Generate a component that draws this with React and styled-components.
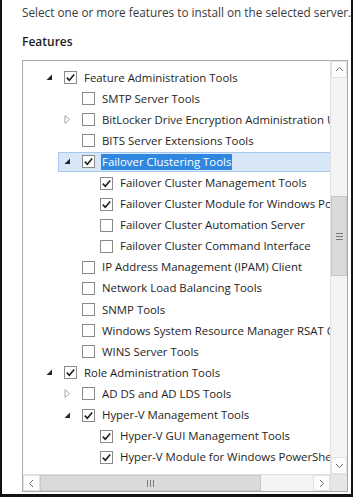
import styled, { createGlobalStyle } from 'styled-components';

const GlobalStyle = createGlobalStyle`
  html, body {
    margin: 0;
    padding: 0;
    background: #ffffff;
  }
  body {
    font-family: "Open Sans", "Noto Sans", sans-serif;
  }
`;

const Frame = styled.div`
  box-sizing: border-box;
  width: 353px;
  height: 497px;
  border-left: 2px solid #111;
  border-right: 2px solid #111;
  border-bottom: 3px solid #111;
  padding: 2px 0 0 20px;
  overflow: hidden;
`;

const Intro = styled.div`
  font-size: 11.75px;
  line-height: 20px;
  color: #3a3a3a;
  white-space: nowrap;
`;

const Heading = styled.div`
  margin-top: 10px;
  font-size: 12px;
  font-weight: 600;
  line-height: 20px;
  color: #1e1e1e;
`;

const ListBox = styled.div`
  margin-top: 8px;
  box-sizing: border-box;
  width: 326px;
  height: 432px;
  border: 1px solid #a9acb1;
  display: grid;
  grid-template-columns: 1fr 17px;
  grid-template-rows: 1fr 17px;
`;

const Viewport = styled.div`
  overflow: hidden;
  padding-top: 6px;
`;

const Row = styled.div`
  height: 21.1px;
  display: flex;
  align-items: center;
  padding-left: 17px;
  white-space: nowrap;
`;

const RowInner = styled.div`
  flex: 1;
  box-sizing: border-box;
  height: ${({ selected }) => (selected ? '20px' : '21px')};
  margin-left: ${({ level }) => level * 18}px;
  display: flex;
  align-items: center;
  background: ${({ selected }) => (selected ? '#d8e7f8' : 'transparent')};
  border: 1px solid ${({ selected }) => (selected ? '#a8c8ee' : 'transparent')};
  border-right: none;
`;

const Expander = styled.div`
  width: 16px;
  height: 16px;
  display: flex;
  align-items: center;
  justify-content: center;
  flex-shrink: 0;
`;

const Box = styled.div`
  box-sizing: border-box;
  width: 13px;
  height: 13px;
  margin-left: 7px;
  border: 1px solid #8a8a8a;
  background: #fff;
  display: flex;
  align-items: center;
  justify-content: center;
  flex-shrink: 0;
`;

const Label = styled.span`
  margin-left: 6px;
  padding: 0 1px;
  font-size: 11.4px;
  line-height: 16px;
  color: ${({ selected }) => (selected ? '#ffffff' : '#1e1e1e')};
  background: ${({ selected }) => (selected ? '#3087e0' : 'transparent')};
`;

const VScroll = styled.div`
  border-left: 1px solid #e0e0e0;
  background: #f4f4f4;
  display: flex;
  flex-direction: column;
`;

const HScroll = styled.div`
  border-top: 1px solid #e0e0e0;
  background: #f4f4f4;
  display: flex;
`;

const Corner = styled.div`
  background: #e6e6e6;
  border-top: 1px solid #e0e0e0;
  border-left: 1px solid #e0e0e0;
`;

const ArrowButton = styled.div`
  box-sizing: border-box;
  width: ${({ horizontal }) => (horizontal ? '17px' : '100%')};
  height: ${({ horizontal }) => (horizontal ? '100%' : '17px')};
  background: #fcfcfc;
  border: 1px solid #e2e2e2;
  display: flex;
  align-items: center;
  justify-content: center;
  flex-shrink: 0;
`;

const Track = styled.div`
  flex: 1;
  display: flex;
  flex-direction: ${({ horizontal }) => (horizontal ? 'row' : 'column')};
`;

const Thumb = styled.div`
  box-sizing: border-box;
  background: #dadada;
  border: 1px solid #c8c8c8;
  display: flex;
  align-items: center;
  justify-content: center;
  ${({ horizontal }) =>
    horizontal
      ? 'width: 221px; height: 100%;'
      : 'height: 80px; width: 100%;'}
`;

const Spacer = styled.div`
  height: ${({ size }) => size}px;
  flex-shrink: 0;
`;

const rows = [
  { level: 0, exp: 'open', checked: true, label: 'Feature Administration Tools' },
  { level: 1, checked: false, label: 'SMTP Server Tools' },
  { level: 1, exp: 'closed', checked: false, label: 'BitLocker Drive Encryption Administration Utilities' },
  { level: 1, checked: false, label: 'BITS Server Extensions Tools' },
  { level: 1, exp: 'open', checked: true, label: 'Failover Clustering Tools', selected: true },
  { level: 2, checked: true, label: 'Failover Cluster Management Tools' },
  { level: 2, checked: true, label: 'Failover Cluster Module for Windows PowerShell' },
  { level: 2, checked: false, label: 'Failover Cluster Automation Server' },
  { level: 2, checked: false, label: 'Failover Cluster Command Interface' },
  { level: 1, checked: false, label: 'IP Address Management (IPAM) Client' },
  { level: 1, checked: false, label: 'Network Load Balancing Tools' },
  { level: 1, checked: false, label: 'SNMP Tools' },
  { level: 1, checked: false, label: 'Windows System Resource Manager RSAT Client' },
  { level: 1, checked: false, label: 'WINS Server Tools' },
  { level: 0, exp: 'open', checked: true, label: 'Role Administration Tools' },
  { level: 1, exp: 'closed', checked: false, label: 'AD DS and AD LDS Tools' },
  { level: 1, exp: 'open', checked: true, label: 'Hyper-V Management Tools' },
  { level: 2, checked: true, label: 'Hyper-V GUI Management Tools' },
  { level: 2, checked: true, label: 'Hyper-V Module for Windows PowerShell' },
];

const OpenTriangle = () => (
  <svg width="7" height="7" viewBox="0 0 7 7">
    <polygon points="6,0.5 6,6 0.5,6" fill="#262626" />
  </svg>
);

const ClosedTriangle = () => (
  <svg width="7" height="9" viewBox="0 0 7 9">
    <polygon points="1,0.5 5.5,4.5 1,8.5" fill="none" stroke="#a6a6a6" strokeWidth="1" />
  </svg>
);

const Check = () => (
  <svg width="11" height="11" viewBox="0 0 11 11">
    <polyline points="1.8,5.6 4.3,8.2 9.2,2.4" fill="none" stroke="#1e1e1e" strokeWidth="1.6" />
  </svg>
);

const Chevron = ({ dir }) => {
  const pts = {
    up: '1,6 4.5,2.5 8,6',
    down: '1,3 4.5,6.5 8,3',
    left: '6,1 2.5,4.5 6,8',
    right: '3,1 6.5,4.5 3,8',
  }[dir];
  return (
    <svg width="9" height="9" viewBox="0 0 9 9">
      <polyline points={pts} fill="none" stroke="#6b6b6b" strokeWidth="1" />
    </svg>
  );
};

const Gripper = ({ horizontal }) => (
  <svg width="7" height="7" viewBox="0 0 7 7">
    {[0.5, 3.5, 6.5].map((p) =>
      horizontal ? (
        <line key={p} x1={p} y1="0" x2={p} y2="7" stroke="#7a7a7a" strokeWidth="1" />
      ) : (
        <line key={p} x1="0" y1={p} x2="7" y2={p} stroke="#7a7a7a" strokeWidth="1" />
      )
    )}
  </svg>
);

const FeatureRow = ({ item }) => (
  <Row>
    <RowInner level={item.level} selected={item.selected}>
      <Expander>
        {item.exp === 'open' && <OpenTriangle />}
        {item.exp === 'closed' && <ClosedTriangle />}
      </Expander>
      <Box>{item.checked && <Check />}</Box>
      <Label selected={item.selected}>{item.label}</Label>
    </RowInner>
  </Row>
);

export default function App() {
  return (
    <>
      <GlobalStyle />
      <Frame>
        <Intro>Select one or more features to install on the selected server.</Intro>
        <Heading>Features</Heading>
        <ListBox>
          <Viewport>
            {rows.map((item) => (
              <FeatureRow key={item.label} item={item} />
            ))}
          </Viewport>
          <VScroll>
            <ArrowButton><Chevron dir="up" /></ArrowButton>
            <Track>
              <Spacer size={118} />
              <Thumb><Gripper /></Thumb>
            </Track>
            <ArrowButton><Chevron dir="down" /></ArrowButton>
          </VScroll>
          <HScroll>
            <ArrowButton horizontal><Chevron dir="left" /></ArrowButton>
            <Track horizontal>
              <Thumb horizontal><Gripper horizontal /></Thumb>
            </Track>
            <ArrowButton horizontal><Chevron dir="right" /></ArrowButton>
          </HScroll>
          <Corner />
        </ListBox>
      </Frame>
    </>
  );
}
